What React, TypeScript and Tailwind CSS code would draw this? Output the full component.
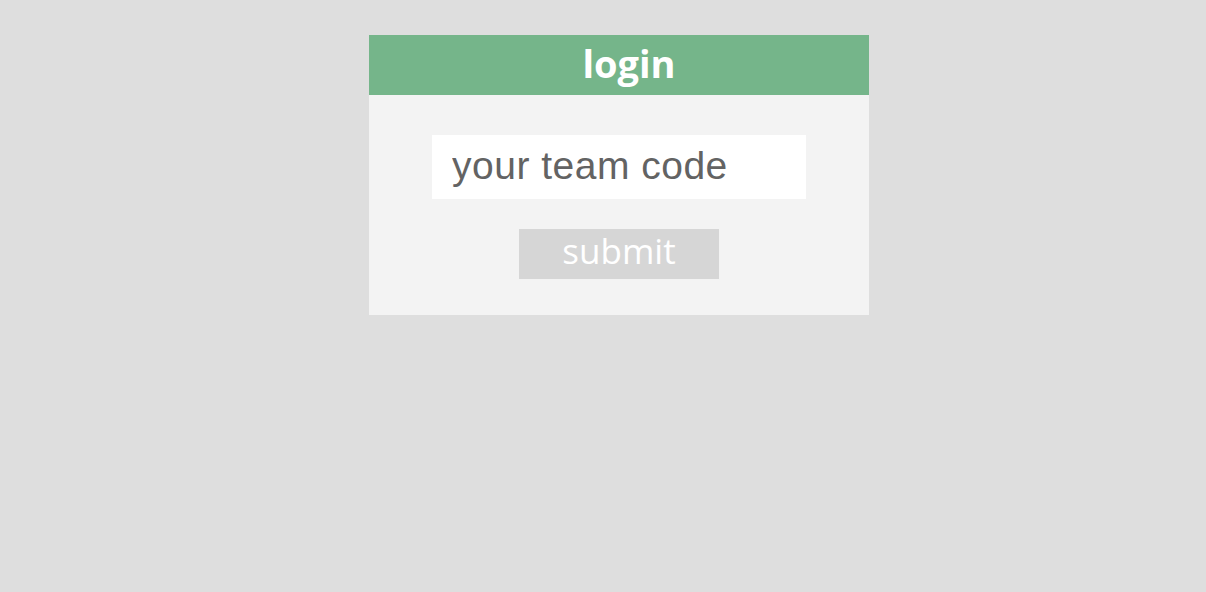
export default function App() {
  return (
    <div className="min-h-[592px] w-full bg-[#dedede] pl-[369px] pt-[35px]">
      <div className="flex w-[500px] flex-col bg-[#f3f3f3]">
        <div className="flex h-[60px] items-center justify-center bg-[#75b58a] pl-[20px] pb-[5px]">
          <span
            className="text-[38px] font-bold leading-none text-white"
            style={{ fontFamily: '"Open Sans", sans-serif' }}
          >
            login
          </span>
        </div>
        <div className="flex flex-col items-center pt-[40px] pb-[36px]">
          <input
            type="text"
            placeholder="your team code"
            className="h-[64px] w-[374px] bg-white pl-[20px] pb-[3px] text-[39px] tracking-[0.5px] text-[#636363] outline-none placeholder:text-[#636363]"
            style={{ fontFamily: '"Liberation Sans", Arial, sans-serif' }}
          />
          <button
            className="mt-[30px] flex h-[50px] w-[200px] items-center justify-center bg-[#d6d6d6] pb-[8px] text-[35px] leading-none text-white"
            style={{ fontFamily: '"Open Sans", sans-serif' }}
          >
            submit
          </button>
        </div>
      </div>
    </div>
  );
}
